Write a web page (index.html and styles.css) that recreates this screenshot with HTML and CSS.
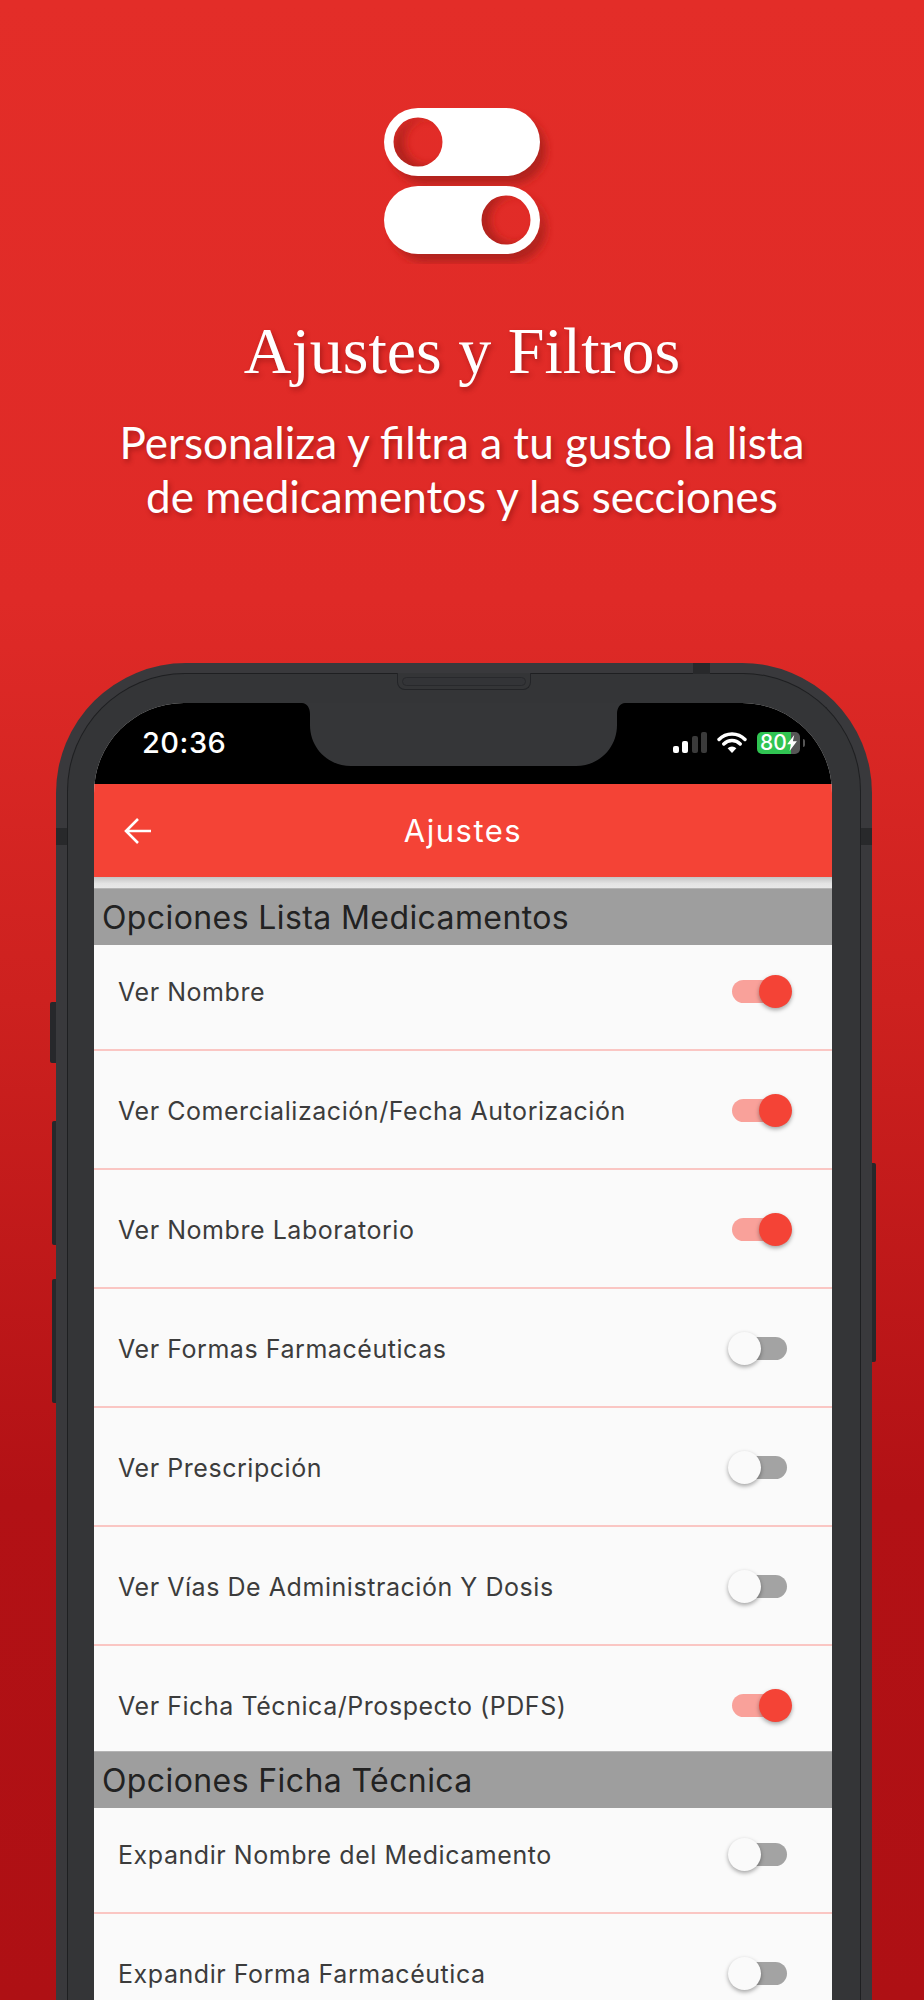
FILE: index.html

```html
<!DOCTYPE html>
<html lang="es">
<head>
  <meta charset="UTF-8">
  <meta name="viewport" content="width=device-width, initial-scale=1.0" />
  <title>Ajustes y Filtros</title>
  <link rel="stylesheet" href="styles.css">
</head>
<body>
  <header class="hero">
    <svg class="hero-icon" width="170" height="156" viewBox="0 0 170 156">
      <defs>
        <filter id="soft" x="-20%" y="-20%" width="150%" height="150%">
          <feGaussianBlur stdDeviation="4" />
        </filter>
        <mask id="holes">
          <rect width="170" height="156" fill="#fff" />
          <circle cx="34" cy="34" r="24.5" fill="#000" />
          <circle cx="122" cy="112" r="24.5" fill="#000" />
        </mask>
      </defs>
      <g fill="#b0201d" filter="url(#soft)">
        <path d="M42 8h86a34 34 0 0 1 0 68h-86a34 34 0 0 1 0-68zM20 34a24 24 0 0 0 48 0 24 24 0 0 0-48 0z" fill-rule="evenodd" />
        <path d="M42 86h86a34 34 0 0 1 0 68h-86a34 34 0 0 1 0-68zM106 112a24 24 0 0 0 48 0 24 24 0 0 0-48 0z" fill-rule="evenodd" />
      </g>
      <g fill="#fff" mask="url(#holes)">
        <rect x="0" y="0" width="156" height="68" rx="34" />
        <rect x="0" y="78" width="156" height="68" rx="34" />
      </g>
    </svg>
    <h1 class="hero-title">Ajustes y Filtros</h1>
    <p class="hero-text">Personaliza y filtra a tu gusto la lista<br>de medicamentos y las secciones</p>
  </header>

  <div class="phone">
    <span class="band band-left"></span>
    <span class="band band-right"></span>
    <span class="band band-top"></span>
    <span class="side-btn btn-mute"></span>
    <span class="side-btn btn-up"></span>
    <span class="side-btn btn-down"></span>
    <span class="side-btn btn-power"></span>
    <div class="phone-inner">
      <div class="screen">
        <div class="status-bar">
          <span class="clock">20:36</span>
          <div class="status-icons">
            <svg width="34" height="21" viewBox="0 0 34 21">
              <rect x="0" y="14" width="6" height="7" rx="2" fill="#fff" />
              <rect x="9" y="9" width="6" height="12" rx="2" fill="#fff" />
              <rect x="19" y="4" width="6" height="17" rx="2" fill="#3a3a3a" />
              <rect x="28" y="0" width="6" height="21" rx="2" fill="#3a3a3a" />
            </svg>
            <svg width="30" height="21" viewBox="0 0 30 21">
              <path d="M2 7.500a18 18 0 0 1 26 0M6.800 12a11.500 11.500 0 0 1 16.400 0" fill="none" stroke="#fff" stroke-width="3.400" stroke-linecap="round" />
              <path d="M15 21l-4.400-4.800a6.300 6.300 0 0 1 8.800 0z" fill="#fff" />
            </svg>
            <div class="battery">
              <span class="battery-level">80</span>
              <svg class="bolt" width="10" height="16" viewBox="0 0 11 18"><path d="M8 0L0 10.500h4.200L2.800 18 11 7H6.500z" fill="#fff" /></svg>
            </div>
            <span class="battery-cap"></span>
          </div>
        </div>
        <svg class="notch" width="323" height="64" viewBox="0 0 323 64">
          <path d="M0 0H323C318 0 315 5 315 11V22C315 45 297 63 274 63H49C26 63 8 45 8 22V11C8 5 5 0 0 0Z" fill="#353638" />
        </svg>

        <div class="app-bar">
          <svg class="back" width="28" height="28" viewBox="0 0 28 28">
            <path d="M27 14H3M14 2L2 14l12 12" fill="none" stroke="#fff" stroke-width="2.600" />
          </svg>
          <span class="app-title">Ajustes</span>
        </div>
        <div class="bar-shadow"></div>

        <div class="section-head">Opciones Lista Medicamentos</div>
        <div class="list">
          <div class="row"><span class="row-label">Ver Nombre</span><span class="switch on"></span></div>
          <div class="row"><span class="row-label">Ver Comercialización/Fecha Autorización</span><span class="switch on"></span></div>
          <div class="row"><span class="row-label">Ver Nombre Laboratorio</span><span class="switch on"></span></div>
          <div class="row"><span class="row-label">Ver Formas Farmacéuticas</span><span class="switch"></span></div>
          <div class="row"><span class="row-label">Ver Prescripción</span><span class="switch"></span></div>
          <div class="row"><span class="row-label">Ver Vías De Administración Y Dosis</span><span class="switch"></span></div>
          <div class="row"><span class="row-label">Ver Ficha Técnica/Prospecto (PDFS)</span><span class="switch on"></span></div>
        </div>

        <div class="section-head">Opciones Ficha Técnica</div>
        <div class="list list-open">
          <div class="row"><span class="row-label">Expandir Nombre del Medicamento</span><span class="switch"></span></div>
          <div class="row"><span class="row-label">Expandir Forma Farmacéutica</span><span class="switch"></span></div>
        </div>
      </div>
    </div>
    <div class="speaker"><span class="speaker-grille"></span></div>
  </div>
</body>
</html>
```

FILE: styles.css

```css
html, body {
  margin: 0;
  height: 2000px;
  overflow: hidden;
}
body {
  font-family: "Inter", "Roboto", sans-serif;
  background: linear-gradient(180deg, #e32d28 0%, #df2a27 30%, #cd211f 50%, #b21115 75%, #ae1014 100%);
}

.hero {
  display: flex;
  flex-direction: column;
  align-items: center;
  padding-top: 108px;
  height: 555px;
}
.hero-icon { margin-left: 14px; }
.hero-title {
  margin: 49px 0 0;
  font-family: "Liberation Serif", serif;
  font-weight: 400;
  font-size: 66px;
  line-height: 76px;
  color: #fff;
  text-shadow: 2px 3px 5px rgba(110, 10, 10, 0.45);
}
.hero-text {
  margin: 26px 0 0;
  font-family: "Lato", sans-serif;
  font-size: 44px;
  line-height: 54px;
  text-align: center;
  color: #fff;
  text-shadow: 2px 3px 5px rgba(110, 10, 10, 0.45);
}

.phone {
  position: relative;
  box-sizing: border-box;
  width: 816px;
  height: 1500px;
  margin-left: 56px;
  padding: 10px 11px 0;
  border-radius: 130px 130px 0 0;
  background: #39393c;
}
.phone-inner {
  box-sizing: border-box;
  height: 100%;
  padding: 29px 28px 0 26px;
  border: 1px solid #1e1f21;
  border-bottom: 0;
  border-radius: 118px 118px 0 0;
  background: #343537;
}
.band { position: absolute; background: #28292b; }
.band-left { left: 0; top: 165px; width: 11px; height: 17px; }
.band-right { right: 0; top: 165px; width: 11px; height: 17px; }
.band-top { left: 637px; top: 0; width: 17px; height: 11px; }
.side-btn {
  position: absolute;
  background: #27282b;
  border-radius: 2px 0 0 2px;
}
.btn-mute { left: -6px; top: 339px; width: 6px; height: 61px; }
.btn-up { left: -4px; top: 458px; width: 4px; height: 124px; }
.btn-down { left: -4px; top: 616px; width: 4px; height: 124px; }
.btn-power {
  right: -4px;
  top: 500px;
  width: 4px;
  height: 199px;
  border-radius: 0 2px 2px 0;
}
.speaker {
  position: absolute;
  left: 341px;
  top: 10px;
  box-sizing: border-box;
  width: 134px;
  height: 17px;
  padding: 4px 4px 0;
  border: 1px solid #232427;
  border-top: 0;
  border-radius: 0 0 8px 8px;
  background: #343537;
}
.speaker-grille {
  display: block;
  height: 9px;
  border: 1px solid #28292c;
  border-radius: 5px;
  box-sizing: border-box;
  background: #333437;
}

.screen {
  position: relative;
  height: 100%;
  overflow: hidden;
  border-radius: 90px 90px 0 0;
  background: #fafafa;
}
.status-bar {
  display: flex;
  justify-content: space-between;
  align-items: center;
  box-sizing: border-box;
  height: 81px;
  padding: 0 27px 2px 48px;
  background: #000;
  color: #fff;
}
.clock {
  font-size: 29px;
  font-weight: 500;
  letter-spacing: 0.5px;
}
.status-icons {
  display: flex;
  align-items: center;
  gap: 10px;
}
.battery {
  display: flex;
  align-items: center;
  box-sizing: border-box;
  width: 43px;
  height: 22px;
  padding-left: 3px;
  border-radius: 5px;
  color: #fff;
  font-size: 21px;
  font-weight: 500;
  background: linear-gradient(90deg, #30c452 0 80%, #555 80% 100%);
}
.battery-cap {
  width: 2px;
  height: 8px;
  margin-left: -7px;
  border-radius: 0 2px 2px 0;
  background: #555;
}
.notch {
  position: absolute;
  left: 208px;
  top: 0;
}

.app-bar {
  position: relative;
  display: flex;
  justify-content: center;
  align-items: center;
  height: 93px;
  background: #f44336;
}
.back {
  position: absolute;
  left: 30px;
  top: 33px;
}
.app-title {
  color: #fff;
  font-size: 31px;
  font-weight: 400;
  letter-spacing: 1.5px;
}
.bar-shadow {
  height: 11px;
  background: linear-gradient(180deg, #c4c4c4, #e4e4e4 60%, #e8e8e8);
}
.section-head {
  box-sizing: border-box;
  height: 57px;
  padding-left: 8px;
  font-size: 32px;
  letter-spacing: 0.4px;
  line-height: 58px;
  color: #222;
  background: #9e9e9e;
  border-top: 1px solid #b4b4b4;
}

.list {
  height: 806px;
  overflow: hidden;
}
.list-open { height: auto; }
.row {
  display: flex;
  justify-content: space-between;
  align-items: center;
  box-sizing: border-box;
  height: 119px;
  padding: 0 45px 0 24px;
  border-bottom: 2px solid #fac6c3;
  font-size: 25px;
  letter-spacing: 0.55px;
  color: #3c3c3c;
}
.row:first-child { margin-top: -13px; }
.row-label { padding-top: 3px; }

.switch {
  position: relative;
  width: 55px;
  height: 23px;
  margin-top: 1px;
  border-radius: 12px;
  background: #a3a3a3;
}
.switch::after {
  content: "";
  position: absolute;
  left: -4px;
  top: -5px;
  width: 33px;
  height: 33px;
  border-radius: 50%;
  background: #fafafa;
  box-shadow: 0 2px 4px rgba(0, 0, 0, 0.35);
}
.switch.on { background: #f9a19a; }
.switch.on::after {
  left: 27px;
  background: #f44336;
}
```
